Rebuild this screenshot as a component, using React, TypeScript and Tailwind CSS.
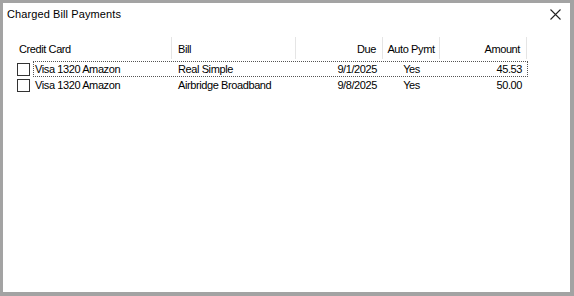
import React from "react";

interface Payment {
  card: string;
  bill: string;
  due: string;
  auto: string;
  amount: string;
}

const rows: Payment[] = [
  { card: "Visa 1320 Amazon", bill: "Real Simple", due: "9/1/2025", auto: "Yes", amount: "45.53" },
  { card: "Visa 1320 Amazon", bill: "Airbridge Broadband", due: "9/8/2025", auto: "Yes", amount: "50.00" },
];

const font = { fontFamily: '"Liberation Sans", Arial, sans-serif' };

function HeaderCell({ label, className }: { label: string; className: string }) {
  return (
    <div className={`h-full flex items-center pt-[3px] border-r border-[#e5e5e5] ${className}`}>
      <span>{label}</span>
    </div>
  );
}

function Row({ p, focused }: { p: Payment; focused: boolean }) {
  return (
    <div className="flex h-[16px] items-center">
      <div className="w-[20px] h-full flex items-center pl-[4px]">
        <div className="w-[13px] h-[13px] border border-[#333333] bg-white" />
      </div>
      <div
        className={`flex h-full items-center pt-[1px] ${
          focused ? "border border-dotted border-[#555555]" : "border border-transparent"
        }`}
      >
        <div className="w-[138px] pl-[1px]">{p.card}</div>
        <div className="w-[124px] pl-[6px]">{p.bill}</div>
        <div className="w-[87px] pr-[6px] text-right">{p.due}</div>
        <div className="w-[57px] text-center">{p.auto}</div>
        <div className="w-[87px] pr-[5px] text-right">{p.amount}</div>
      </div>
    </div>
  );
}

export default function App() {
  return (
    <div
      className="w-[574px] h-[296px] bg-white border-t-[3px] border-l-[3px] border-r-[4px] border-b-[4px] border-[#a3a3a3] text-black text-[11px] flex flex-col"
      style={font}
    >
      <div className="h-[33px] flex items-start justify-between pl-[4px] pr-[9px] pt-[3px]">
        <span className="text-[11px] tracking-[0.1px]">Charged Bill Payments</span>
        <svg width="11" height="11" viewBox="0 0 11 11" className="mt-[3px]">
          <path d="M0.5 0.5 L10.5 10.5 M10.5 0.5 L0.5 10.5" stroke="#222" strokeWidth="1.1" />
        </svg>
      </div>

      <div className="pl-[10px] tracking-[-0.4px]">
        <div className="flex h-[22px] mt-[1px]">
          <HeaderCell label="Credit Card" className="w-[159px] pl-[6px]" />
          <HeaderCell label="Bill" className="w-[124px] pl-[6px]" />
          <HeaderCell label="Due" className="w-[87px] justify-end pr-[6px]" />
          <HeaderCell label="Auto Pymt" className="w-[57px] justify-center" />
          <HeaderCell label="Amount" className="w-[87px] justify-end pr-[6px]" />
        </div>
        <div className="mt-[2px]">
          {rows.map((p, i) => (
            <Row key={i} p={p} focused={i === 0} />
          ))}
        </div>
      </div>
    </div>
  );
}
